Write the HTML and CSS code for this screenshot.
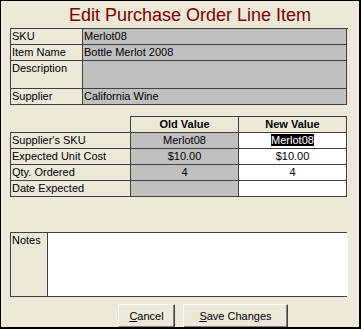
FILE: index.html
```html
<!DOCTYPE html>
<html lang="en">
 <head>
  <meta charset="UTF-8" />
  <title>Edit Purchase Order Line Item</title>
  <link rel="stylesheet" href="styles.css">
 </head>
 <body>
  <div class="window">
   <h1 class="title">Edit Purchase Order Line Item</h1>
   <!-- item details -->
   <div class="item-grid">
    <div class="cell">SKU</div>
    <div class="cell gray">Merlot08</div>
    <div class="cell">Item Name</div>
    <div class="cell gray">Bottle Merlot 2008</div>
    <div class="cell tall">Description</div>
    <div class="cell gray tall"></div>
    <div class="cell">Supplier</div>
    <div class="cell gray">California Wine</div>
   </div>
   <!-- old / new values -->
   <div class="values-grid">
    <div class="blank"></div>
    <div class="head">Old Value</div>
    <div class="head">New Value</div>
    <div class="cell label">Supplier's SKU</div>
    <div class="cell gray center">Merlot08</div>
    <div class="cell white center"><span class="selected">Merlot08</span></div>
    <div class="cell label">Expected Unit Cost</div>
    <div class="cell gray center">$10.00</div>
    <div class="cell white center">$10.00</div>
    <div class="cell label">Qty. Ordered</div>
    <div class="cell gray center">4</div>
    <div class="cell white center">4</div>
    <div class="cell label">Date Expected</div>
    <div class="cell gray center"></div>
    <div class="cell white center"></div>
   </div>
   <!-- notes -->
   <div class="notes">
    <div class="notes-label">Notes</div>
    <div class="notes-box"></div>
   </div>
   <div class="buttons">
    <button class="btn btn-cancel"><u>C</u>ancel</button>
    <button class="btn btn-save"><u>S</u>ave Changes</button>
   </div>
  </div>
 </body>
</html>
```

FILE: styles.css
```css
body {
 margin: 0;
 font-family: "Liberation Sans", Arial, sans-serif;
 font-size: 11px;
 color: #000;
}
.window {
 width: 361px;
 height: 329px;
 box-sizing: border-box;
 border-style: solid;
 border-color: #000;
 border-width: 1px 2px 2px 1px;
 background-color: #ece9d8;
 padding: 4px 0 0 9px;
 overflow: hidden;
}
.title {
 margin: 0;
 padding-left: 11px;
 font-size: 18px;
 font-weight: normal;
 line-height: 20px;
 height: 20px;
 color: #800000;
 text-align: center;
}
.cell {
 box-sizing: border-box;
 height: 16px;
 border-right: 1px solid #404040;
 border-bottom: 1px solid #404040;
 padding: 1px 0 0 1px;
 line-height: 13px;
 white-space: nowrap;
}
.gray {
 background-color: #c0c0c0;
}
.white {
 background-color: #fff;
}
.center {
 text-align: center;
 padding-left: 0;
}
.item-grid {
 display: grid;
 grid-template-columns: 72px 264px;
 width: 337px;
 margin-top: 3px;
 border-top: 1px solid #404040;
 border-left: 1px solid #404040;
}
.item-grid .tall {
 height: 28px;
}
.values-grid {
 display: grid;
 grid-template-columns: 121px 108px 108px;
 width: 337px;
 margin-top: 11px;
}
.blank {
 box-sizing: border-box;
 height: 17px;
 border-right: 1px solid #404040;
 border-bottom: 1px solid #404040;
}
.head {
 box-sizing: border-box;
 height: 17px;
 border-top: 1px solid #404040;
 border-right: 1px solid #404040;
 border-bottom: 1px solid #404040;
 font-weight: bold;
 text-align: center;
 line-height: 15px;
}
.values-grid .label {
 border-left: 1px solid #404040;
}
.selected {
 background-color: #000;
 color: #fff;
}
.notes {
 display: grid;
 grid-template-columns: 37px 300px;
 width: 337px;
 height: 65px;
 box-sizing: border-box;
 margin-top: 35px;
 border: 1px solid #404040;
}
.notes-label {
 border-right: 1px solid #404040;
 padding: 1px 0 0 1px;
 line-height: 13px;
}
.notes-box {
 background-color: #fff;
}
.buttons {
 display: flex;
 gap: 8px;
 margin-top: 7px;
 padding-left: 108px;
}
.btn {
 box-sizing: border-box;
 height: 24px;
 padding: 0;
 font-family: "Liberation Sans", Arial, sans-serif;
 font-size: 11px;
 color: #000;
 background-color: #ece9d8;
 border-style: solid;
 border-width: 1px;
 border-color: #fff #404040 #404040 #fff;
 box-shadow: inset -1px -1px 0 #808080;
}
.btn-cancel {
 width: 57px;
}
.btn-save {
 width: 105px;
}
```
